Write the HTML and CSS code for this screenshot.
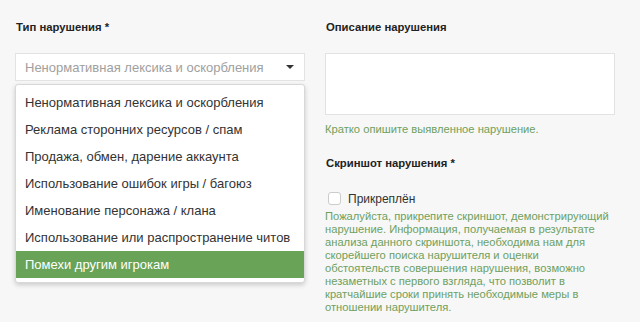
FILE: index.html
```html
<!DOCTYPE html>
<html lang="ru">
<head>
<meta charset="utf-8">
<link rel="stylesheet" href="styles.css">
</head>
<body>
<div class="form">
  <div class="col">
    <div class="label">Тип нарушения *</div>
    <div class="select-wrap">
      <div class="select">
        <span class="placeholder">Ненормативная лексика и оскорбления</span>
        <svg class="caret" width="8" height="4" viewBox="0 0 8 4"><path d="M0 0H8L4 4Z" fill="#333"/></svg>
      </div>
      <ul class="menu">
        <li>Ненормативная лексика и оскорбления</li>
        <li>Реклама сторонних ресурсов / спам</li>
        <li>Продажа, обмен, дарение аккаунта</li>
        <li>Использование ошибок игры / багоюз</li>
        <li>Именование персонажа / клана</li>
        <li>Использование или распространение читов</li>
        <li class="active">Помехи другим игрокам</li>
      </ul>
    </div>
  </div>
  <div class="col">
    <div class="label">Описание нарушения</div>
    <div class="textarea"></div>
    <div class="help">Кратко опишите выявленное нарушение.</div>
    <div class="label label-gap">Скриншот нарушения *</div>
    <label class="check"><span class="box"></span>Прикреплён</label>
    <p class="help para">Пожалуйста, прикрепите скриншот, демонстрирующий нарушение. Информация, получаемая в результате анализа данного скриншота, необходима нам для скорейшего поиска нарушителя и оценки обстоятельств совершения нарушения, возможно незаметных с первого взгляда, что позволит в кратчайшие сроки принять необходимые меры в отношении нарушителя.</p>
  </div>
</div>
</body>
</html>
```
FILE: styles.css
```css
html, body {
  margin: 0;
  background: #f7f7f7;
  font-family: "Liberation Sans", Arial, sans-serif;
  color: #333;
}
.form {
  display: grid;
  grid-template-columns: 290px 290px;
  column-gap: 20px;
  padding: 19px 25px 0 15px;
}
.col {
  display: flex;
  flex-direction: column;
}
.label {
  font-size: 11.3px;
  font-weight: bold;
  line-height: 17px;
  color: #222;
  padding-left: 1px;
  margin-bottom: 17px;
}
.select-wrap {
  position: relative;
}
.select {
  box-sizing: border-box;
  height: 28px;
  background: #fff;
  border: 1px solid #e3e3e3;
  display: flex;
  align-items: center;
  justify-content: space-between;
  padding: 0 10px 0 9px;
  font-size: 13px;
}
.placeholder {
  color: #a0a0a0;
}
.menu {
  position: absolute;
  top: 31px;
  left: 0;
  right: 0;
  margin: 0;
  padding: 4px 0;
  list-style: none;
  background: #fff;
  border: 1px solid #d8d8d8;
  border-radius: 3px;
  box-shadow: 0 2px 5px rgba(0,0,0,0.18);
  font-size: 13px;
}
.menu li {
  height: 27px;
  line-height: 27px;
  padding: 0 9px;
  color: #333;
  white-space: nowrap;
}
.menu li.active {
  background: #68a357;
  color: #fff;
}
.textarea {
  box-sizing: border-box;
  height: 62px;
  background: #fff;
  border: 1px solid #e3e3e3;
}
.help {
  font-size: 11.2px;
  line-height: 17px;
  color: #6ea05e;
  margin-top: 6px;
}
.label-gap {
  margin-top: 17px;
  margin-bottom: 18px;
}
.check {
  display: flex;
  align-items: center;
  font-size: 12px;
  color: #333;
  height: 17px;
  padding-left: 3px;
}
.box {
  box-sizing: border-box;
  width: 13px;
  height: 13px;
  border: 1px solid #ccc;
  border-radius: 3px;
  background: #fff;
  margin-right: 7px;
}
.para {
  margin: 0;
  margin-top: 3px;
  line-height: 13px;
}
```
